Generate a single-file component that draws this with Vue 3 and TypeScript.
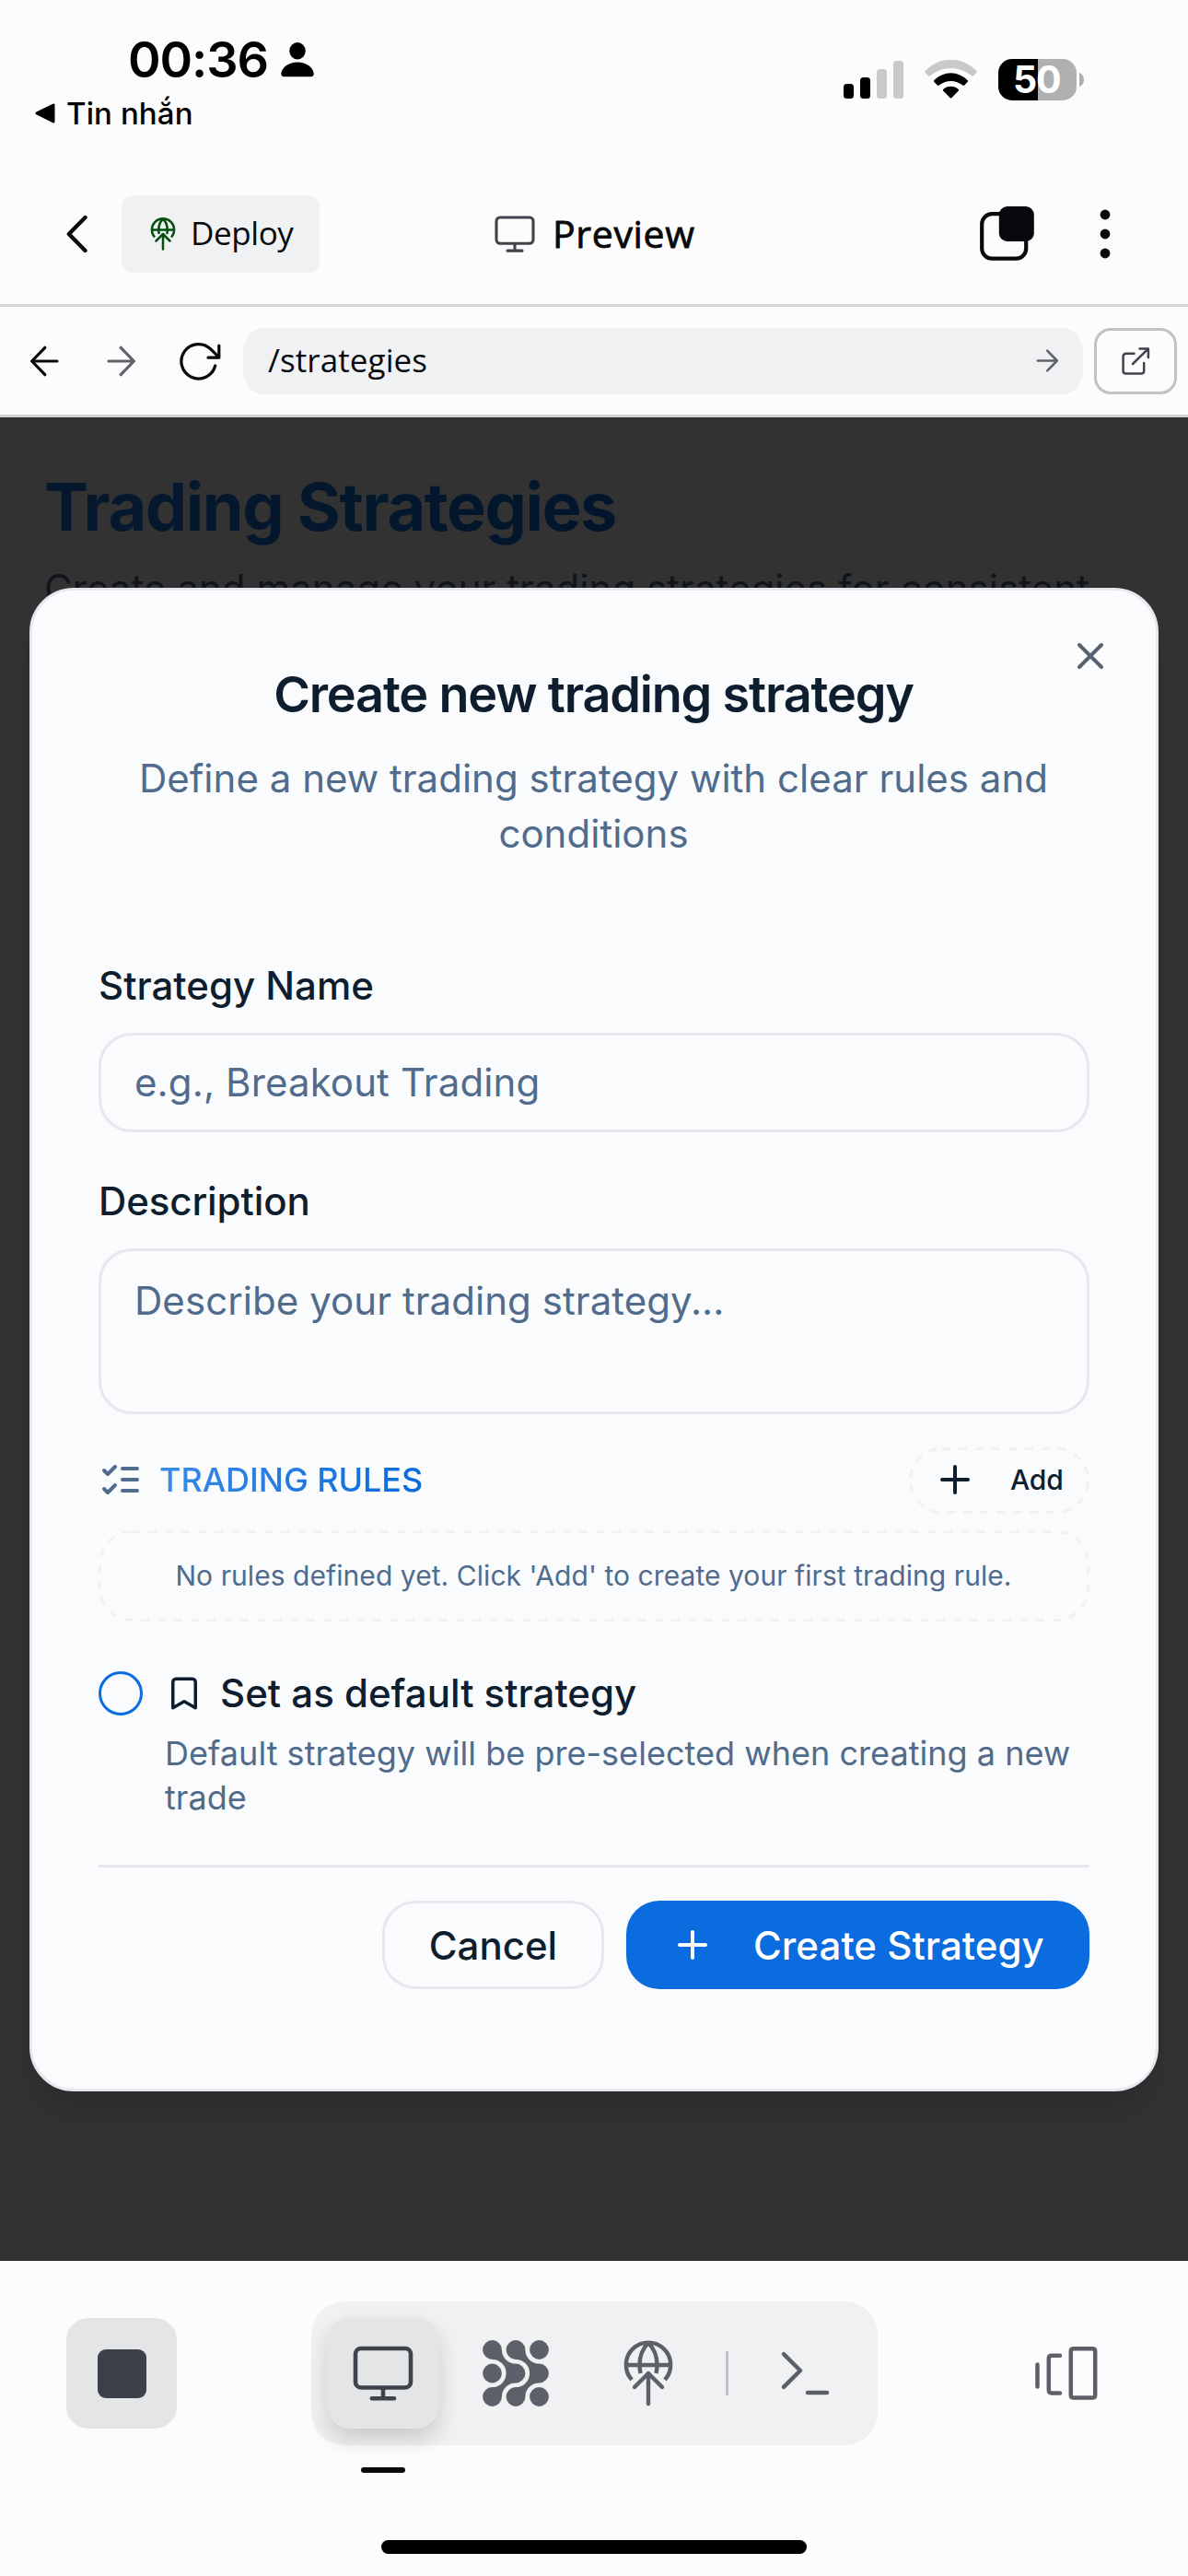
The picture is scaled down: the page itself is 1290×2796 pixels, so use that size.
<script setup lang="ts">
import { ref } from 'vue'

const path = ref('/strategies')
const strategyName = ref('')
const description = ref('')

interface SignalBar {
  x: number
  h: number
  on: boolean
}

const signal: SignalBar[] = [
  { x: 0, h: 16, on: true },
  { x: 18, h: 23, on: true },
  { x: 36, h: 32, on: false },
  { x: 54, h: 41, on: false },
]
</script>

<template>
  <div class="screen">
    <div class="status">
      <div class="status-left">
        <div class="time-row">
          <span class="time">00:36</span>
          <svg class="person" width="36" height="40" viewBox="0 0 36 40">
            <ellipse cx="18" cy="10.3" rx="8.7" ry="9.2" />
            <path d="M3.6 38.2Q.3 38.2 .3 35C.8 28 8.5 22.4 18 22.4S35.2 28 35.7 35Q35.7 38.2 32.4 38.2Z" />
          </svg>
        </div>
        <div class="back-app">
          <svg width="22" height="22" viewBox="0 0 22 22">
            <path d="M2 10.9 20 2V20Z" stroke="#000" stroke-width="3" stroke-linejoin="round" />
          </svg>
          <span>Tin nhắn</span>
        </div>
      </div>
      <div class="status-right">
        <svg width="65" height="42" viewBox="0 0 65 42">
          <rect
            v-for="b in signal"
            :key="b.x"
            :x="b.x"
            :y="42 - b.h"
            width="11"
            :height="b.h"
            rx="3.5"
            :fill="b.on ? '#000' : '#c9c9c9'"
          />
        </svg>
        <svg class="wifi" width="57" height="42" viewBox="0 0 57 42">
          <path
            fill="#c9c9c9"
            d="M.6 12A37.7 37.7 0 0 1 56.4 12Q57.2 13 56.4 13.8L52.8 17.6Q52 18.3 51.2 17.6A34 34 0 0 0 5.8 17.6Q5 18.3 4.2 17.6L.6 13.8Q-.2 13 .6 12Z"
          />
          <path
            d="M10.2 22.2A25.3 25.3 0 0 1 46.8 22.2Q47.5 23 46.8 23.8L43.2 27.6Q42.3 28.4 41.4 27.6A20 20 0 0 0 15.6 27.6Q14.7 28.4 13.8 27.6L10.2 23.8Q9.5 23 10.2 22.2Z"
          />
          <path d="M20.2 32A12.5 12.5 0 0 1 36.8 32Q37.5 32.8 36.8 33.6L29.3 41.2Q28.5 42 27.7 41.2L20.2 33.6Q19.5 32.8 20.2 32Z" />
        </svg>
        <div class="battery">50</div>
        <svg class="nub" width="5" height="15" viewBox="0 0 5 15">
          <path fill="#b0b0b0" d="M0 0C3 1 5 4 5 7.5S3 14 0 15Z" />
        </svg>
      </div>
    </div>

    <header class="topbar">
      <div class="top-left">
        <svg width="24" height="44" viewBox="0 0 24 44">
          <path class="ln" stroke="#07090c" stroke-width="4.4" d="M20.5 4 2.8 22 20.5 40" />
        </svg>
        <div class="deploy">
          <svg width="36" height="36" viewBox="0 0 72 72">
            <g fill="none" stroke="#05500f" stroke-width="5" stroke-linecap="round" stroke-linejoin="round">
              <path stroke-linecap="butt" d="M18 43A24.2 24.2 0 1 1 54 43M11.8 27H60.2M36 3C29 10 26.5 19 26.5 27Q26.5 32 27.6 36M36 3C43 10 45.5 19 45.5 27Q45.5 32 44.4 36" />
              <path d="M36 69V36M21 51 36 36 51 51" />
            </g>
          </svg>
          <span>Deploy</span>
        </div>
      </div>
      <div class="top-title">
        <svg width="48" height="48" viewBox="0 0 72 72">
          <g class="ln" stroke="#3f434b" stroke-width="4.6">
            <rect x="6" y="9" width="60" height="42.5" rx="6" />
            <path d="M36 52V63M24 63.2H48" />
          </g>
        </svg>
        <span>Preview</span>
      </div>
      <div class="top-right">
        <svg width="60" height="60" viewBox="0 0 60 60">
          <rect x="2.2" y="8.2" width="48" height="48.5" rx="11" fill="none" stroke="#07090c" stroke-width="4.2" />
          <rect x="20.8" y="0" width="38" height="38" rx="9" fill="#07090c" />
        </svg>
        <svg width="12" height="54" viewBox="0 0 12 54">
          <g fill="#07090c">
            <circle cx="6" cy="6" r="5.4" />
            <circle cx="6" cy="27" r="5.4" />
            <circle cx="6" cy="48" r="5.4" />
          </g>
        </svg>
      </div>
    </header>

    <nav class="urlbar">
      <svg width="36" height="36" viewBox="0 0 36 36">
        <path class="ln" stroke="#07090c" stroke-width="3.2" d="M18.8 3.3 4.6 18 18.8 32.7M4.6 18H32" />
      </svg>
      <svg width="36" height="36" viewBox="0 0 36 36">
        <path class="ln" stroke="#5f626a" stroke-width="3.2" d="M17.2 3.3 31.4 18 17.2 32.7M31.4 18H4" />
      </svg>
      <svg width="48" height="48" viewBox="0 0 48 48">
        <path
          class="ln"
          stroke="#07090c"
          stroke-width="3.2"
          d="M41.7 29A18.7 18.7 0 1 1 37 11.2Q41 15 45.8 20M45.8 7V20.2H34"
        />
      </svg>
      <div class="address">
        <span>{{ path }}</span>
        <svg width="27" height="27" viewBox="0 0 27 27">
          <path class="ln" stroke="#5f626a" stroke-width="2.5" d="M12.2 2.7 22.8 13.5 12.2 24.3M22.8 13.5H1.8" />
        </svg>
      </div>
      <div class="open-ext">
        <svg width="36" height="36" viewBox="0 0 36 36">
          <path
            class="ln"
            stroke="#3f434b"
            stroke-width="2.5"
            d="M16.5 9.7H8Q4.6 9.7 4.6 13V28.5Q4.6 31.6 8 31.6H24Q27.2 31.6 27.2 28.5V20M15 21 31.7 4.6M22.5 4.6H31.9V14"
          />
        </svg>
      </div>
    </nav>

    <main class="page">
      <h1>Trading Strategies</h1>
      <p class="lead">Create and manage your trading strategies for consistent</p>

      <div class="overlay">
        <section class="modal">
          <svg class="close" width="48" height="48" viewBox="0 0 24 24">
            <path class="ln" stroke="#566270" stroke-width="2" d="M18 6 6 18M6 6l12 12" />
          </svg>
          <h2>Create new trading strategy</h2>
          <p class="intro">Define a new trading strategy with clear rules and conditions</p>

          <label class="field-label">Strategy Name</label>
          <input v-model="strategyName" class="field" placeholder="e.g., Breakout Trading" />

          <label class="field-label second">Description</label>
          <textarea v-model="description" class="field area" placeholder="Describe your trading strategy..."></textarea>

          <div class="rules-head">
            <div class="rules-title">
              <svg width="48" height="48" viewBox="0 0 24 24">
                <path class="ln" stroke="#506b8b" stroke-width="2" d="m3 17 2 2 4-4M3 7l2 2 4-4M13 6h8M13 12h8M13 18h8" />
              </svg>
              <span>TRADING RULES</span>
            </div>
            <button class="add">
              <svg class="dashes" width="196" height="72">
                <rect x="1.5" y="1.5" width="193" height="69" rx="34.5" />
              </svg>
              <svg width="48" height="48" viewBox="0 0 24 24">
                <path class="ln" stroke="#0f1e2e" stroke-width="2" d="M5 12h14M12 5v14" />
              </svg>
              <span>Add</span>
            </button>
          </div>
          <div class="empty">
            <svg class="dashes" width="1076" height="99">
              <rect x="1.5" y="1.5" width="1073" height="96" rx="34.5" />
            </svg>
            No rules defined yet. Click 'Add' to create your first trading rule.
          </div>

          <div class="default-row">
            <span class="check"></span>
            <svg width="42" height="42" viewBox="0 0 24 24">
              <path class="ln" stroke="#0f1e2e" stroke-width="2" d="m19 21-7-4-7 4V5a2 2 0 0 1 2-2h10a2 2 0 0 1 2 2v16z" />
            </svg>
            <span class="default-label">Set as default strategy</span>
          </div>
          <p class="hint">Default strategy will be pre-selected when creating a new trade</p>

          <div class="actions">
            <button class="cancel">Cancel</button>
            <button class="create">
              <svg width="48" height="48" viewBox="0 0 24 24">
                <path class="ln" stroke="#fff" stroke-width="2" d="M5 12h14M12 5v14" />
              </svg>
              <span>Create Strategy</span>
            </button>
          </div>
        </section>
      </div>
    </main>

    <footer class="dock">
      <div class="dock-row">
        <div class="stop"><span></span></div>
        <div class="tabs">
          <div class="tab active">
            <svg width="72" height="72" viewBox="0 0 72 72">
              <g class="ln" stroke="#3f434b" stroke-width="4.6">
                <rect x="6" y="9" width="60" height="42.5" rx="6" />
                <path d="M36 52V63M23.8 63.2H48" />
              </g>
            </svg>
            <i></i>
          </div>
          <div class="tab">
            <svg width="72" height="72" viewBox="0 0 72 72" fill="#5d6068">
              <path
                d="M20.9 10.5A15.1 15.1 0 0 0 36 25.6A10.4 10.4 0 0 1 36 46.4A15.1 15.1 0 0 0 20.9 61.5A10.4 10.4 0 1 1 10.5 51.1A15.1 15.1 0 0 0 10.5 20.9A10.4 10.4 0 1 1 20.9 10.5Z"
              />
              <path
                d="M46.4 10.5A15.1 15.1 0 0 0 61.5 25.6A10.4 10.4 0 0 1 61.5 46.4A15.1 15.1 0 0 0 46.4 61.5A10.4 10.4 0 1 1 36 51.1A15.1 15.1 0 0 0 36 20.9A10.4 10.4 0 1 1 46.4 10.5Z"
              />
              <circle cx="61.5" cy="10.5" r="10.4" />
              <circle cx="10.5" cy="36" r="10.4" />
              <circle cx="61.5" cy="61.5" r="10.4" />
            </svg>
          </div>
          <div class="tab">
            <svg width="72" height="72" viewBox="0 0 72 72">
              <g fill="none" stroke="#5d6068" stroke-width="4.4" stroke-linecap="round" stroke-linejoin="round">
                <path stroke-linecap="butt" d="M18 43A24.2 24.2 0 1 1 54 43M11.8 27H60.2M36 3C29 10 26.5 19 26.5 27Q26.5 32 27.6 36M36 3C43 10 45.5 19 45.5 27Q45.5 32 44.4 36" />
                <path d="M36 69V36M21 51 36 36 51 51" />
              </g>
            </svg>
          </div>
          <span class="sep"></span>
          <div class="tab">
            <svg width="72" height="72" viewBox="0 0 72 72">
              <path class="ln" stroke="#5d6068" stroke-width="4.5" d="M12 15.2 30 33 12 50.8M38 57H59" />
            </svg>
          </div>
        </div>
        <div class="fold">
          <svg width="72" height="72" viewBox="0 0 72 72">
            <path
              class="ln"
              stroke="#5d6068"
              stroke-width="4.5"
              d="M4.5 26.5V50.5M29 16.8H20Q16.8 16.8 16.8 20V54.2Q16.8 57.4 20 57.4H29M44 9.2H64Q67.2 9.2 67.2 12V59.8Q67.2 62.6 64 62.6H44Q40.8 62.6 40.8 59.8V12Q40.8 9.2 44 9.2Z"
            />
          </svg>
        </div>
      </div>
      <div class="home"></div>
    </footer>
  </div>
</template>

<style>
html,
body {
  margin: 0;
  background: #fcfcfc;
}
</style>

<style scoped>
.screen {
  box-sizing: border-box;
  width: 1290px;
  height: 2796px;
  display: flex;
  flex-direction: column;
  overflow: hidden;
  background: #fcfcfc;
  font-family: Inter, sans-serif;
  color: #0f1e2e;
}
.screen * {
  box-sizing: border-box;
}
svg {
  display: block;
  flex: none;
}
.ln {
  fill: none;
  stroke-linecap: round;
  stroke-linejoin: round;
}
h1,
h2,
p {
  margin: 0;
}
button {
  font: inherit;
  color: inherit;
  padding: 0;
  margin: 0;
}

/* status bar */
.status {
  height: 178px;
  display: flex;
  justify-content: space-between;
  color: #000;
}
.status-left {
  padding-top: 35px;
}
.time-row {
  display: flex;
  padding-left: 139px;
}
.time {
  font-size: 54px;
  font-weight: 600;
  line-height: 60px;
  letter-spacing: -1.1px;
}
.person {
  margin: 10px 0 0 14px;
}
.back-app {
  display: flex;
  align-items: center;
  gap: 12px;
  margin-top: 8px;
  padding-left: 38px;
  font-size: 33px;
  font-weight: 500;
  line-height: 40px;
  letter-spacing: 0.1px;
}
.status-right {
  display: flex;
  align-items: flex-start;
  padding: 64px 113px 0 0;
}
.status-right > svg:first-child {
  margin-top: 1px;
}
.wifi {
  margin: 1px 23px 0 23px;
}
.battery {
  width: 85px;
  height: 45px;
  border-radius: 15px;
  background: linear-gradient(90deg, #000 0 43px, #b0b0b0 43px);
  color: #fff;
  font-size: 41px;
  font-weight: 700;
  line-height: 45px;
  letter-spacing: -1.2px;
  padding-left: 16px;
}
.nub {
  margin: 15px 0 0 3px;
}

/* app header */
.topbar {
  height: 155px;
  border-bottom: 3px solid #d4d4d4;
  padding: 0 72px;
  display: grid;
  grid-template-columns: 1fr auto 1fr;
  align-items: center;
  color: #07090c;
  font-family: 'Open Sans', sans-serif;
}
.top-left,
.top-title,
.top-right {
  display: flex;
  align-items: center;
}
.top-left {
  gap: 36px;
}
.deploy {
  width: 215px;
  height: 84px;
  border-radius: 12px;
  background: #eff1f3;
  display: flex;
  align-items: center;
  gap: 12px;
  padding-left: 27px;
  font-size: 35px;
}
.deploy span {
  padding-bottom: 4px;
  letter-spacing: -0.4px;
}
.top-title {
  gap: 15px;
  font-size: 41px;
  font-weight: 500;
}
.top-title span {
  width: 157px;
  padding: 0 0 2px 2px;
  letter-spacing: 0.65px;
  -webkit-text-stroke: 0.8px currentColor;
}
.top-right {
  justify-content: flex-end;
  gap: 70px;
  padding-right: 12px;
}

/* address bar */
.urlbar {
  height: 120px;
  border-bottom: 3px solid #d0d1d2;
  padding: 0 12px 0 30px;
  display: flex;
  align-items: center;
}
.urlbar > svg:nth-child(2) {
  margin: 0 42px 0 48px;
}
.address {
  flex: 1;
  height: 72px;
  margin: 0 12px 0 24px;
  padding: 0 24px 0 27px;
  border-radius: 24px;
  background: #eff1f3;
  display: flex;
  align-items: center;
  justify-content: space-between;
  font-family: 'Open Sans', sans-serif;
  font-size: 35px;
  color: #07090c;
}
.address span {
  padding-bottom: 3px;
  letter-spacing: 0.1px;
}
.open-ext {
  width: 90px;
  height: 72px;
  border: 3px solid #bfc4c3;
  border-radius: 18px;
  display: flex;
  align-items: center;
  justify-content: center;
}

/* page behind the dialog */
.page {
  position: relative;
  height: 2001px;
  padding: 52px 48px 0;
  background: #fbfbfb;
}
h1 {
  width: max-content;
  font-size: 72px;
  font-weight: 700;
  line-height: 90px;
  letter-spacing: -1.44px;
  color: transparent;
  background: linear-gradient(90deg, #1d7ce2, #0a6bdc);
  background-clip: text;
}
.lead {
  margin-top: 14px;
  font-size: 42px;
  line-height: 60px;
  letter-spacing: 0.05px;
  white-space: nowrap;
  color: #506b8b;
}
.overlay {
  position: absolute;
  inset: 0;
  background: rgba(0, 0, 0, 0.8);
  display: flex;
  align-items: center;
  justify-content: center;
}
.modal {
  position: relative;
  width: 1226px;
  height: 1632px;
  margin-top: 1px;
  border: 3px solid #e6e7ef;
  border-radius: 48px;
  background: #f9fbfd;
  padding: 72px;
  box-shadow:
    0 30px 45px -9px rgba(0, 0, 0, 0.1),
    0 12px 18px -12px rgba(0, 0, 0, 0.1);
}
.close {
  position: absolute;
  top: 47px;
  right: 47px;
}
h2 {
  font-size: 54px;
  font-weight: 600;
  line-height: 81px;
  letter-spacing: -1.18px;
  text-align: center;
  padding-right: 1px;
}
.intro {
  margin: 21px 0 114px;
  font-size: 42px;
  line-height: 60px;
  letter-spacing: 0.02px;
  text-align: center;
  padding-right: 1px;
  color: #506b8b;
}
.field-label {
  display: block;
  font-size: 42px;
  font-weight: 500;
  line-height: 42px;
  margin-bottom: 30px;
}
.field-label.second {
  margin-top: 54px;
  letter-spacing: -0.1px;
}
.field {
  display: block;
  width: 100%;
  height: 108px;
  border: 3px solid #e6e7ef;
  border-radius: 36px;
  background: transparent;
  padding: 0 36px 2px;
  font: 400 42px/60px Inter, sans-serif;
  letter-spacing: 0.12px;
  outline: none;
}
.field::placeholder {
  color: #506b8b;
  opacity: 1;
}
.area {
  height: 180px;
  padding: 24px 36px;
  letter-spacing: 0.06px;
  resize: none;
}
.rules-head {
  margin-top: 36px;
  height: 72px;
  display: flex;
  align-items: center;
  justify-content: space-between;
}
.rules-title {
  display: flex;
  align-items: center;
  gap: 18px;
  padding-bottom: 2px;
  font-size: 36px;
  font-weight: 500;
  letter-spacing: -0.08px;
}
.rules-title span {
  color: transparent;
  background: linear-gradient(90deg, #3b8ae6, #0a6bdc);
  background-clip: text;
}
.add {
  position: relative;
  width: 196px;
  height: 72px;
  border: 0;
  background: transparent;
  display: flex;
  align-items: center;
  padding: 0 0 2px 26px;
  gap: 36px;
  font-size: 30px;
  font-weight: 500;
  letter-spacing: -0.2px;
}
.dashes {
  position: absolute;
  top: 0;
  left: 0;
  fill: none;
  stroke: #f0f1f3;
  stroke-width: 3px;
  stroke-dasharray: 9 9;
}
.empty {
  position: relative;
  margin-top: 18px;
  height: 99px;
  font-size: 30px;
  line-height: 99px;
  letter-spacing: 0.06px;
  text-align: center;
  padding-right: 1px;
  color: #506b8b;
}
.default-row {
  margin-top: 54px;
  height: 48px;
  display: flex;
  align-items: center;
}
.check {
  width: 48px;
  height: 48px;
  border: 3px solid #0a6de0;
  border-radius: 50%;
  margin-right: 24px;
}
.default-label {
  margin-left: 18px;
  font-size: 42px;
  font-weight: 500;
  line-height: 48px;
}
.hint {
  margin-top: 17px;
  padding-left: 72px;
  font-size: 36px;
  line-height: 48px;
  letter-spacing: 0.03px;
  color: #506b8b;
}
.actions {
  margin-top: 49px;
  border-top: 3px solid #e6e7ef;
  padding-top: 36px;
  display: flex;
  justify-content: flex-end;
  gap: 24px;
  font-size: 42px;
  font-weight: 500;
}
.cancel {
  width: 241px;
  height: 96px;
  border: 3px solid #e6e7ef;
  border-radius: 36px;
  background: transparent;
}
.create {
  width: 503px;
  height: 96px;
  border: 0;
  border-radius: 36px;
  background: #0a6cde;
  color: #fff;
  display: flex;
  align-items: center;
  padding-left: 48px;
  gap: 42px;
  letter-spacing: 0.05px;
}

/* bottom dock */
.dock {
  flex: 1;
  padding: 44px 72px 0;
  display: flex;
  flex-direction: column;
  align-items: center;
}
.dock-row {
  width: 100%;
  display: grid;
  grid-template-columns: 1fr auto 1fr;
  align-items: center;
}
.stop {
  width: 120px;
  height: 120px;
  border-radius: 24px;
  background: #e4e5e7;
  display: flex;
  align-items: center;
  justify-content: center;
}
.stop span {
  width: 53px;
  height: 53px;
  border-radius: 9px;
  background: #3d4049;
}
.tabs {
  height: 156px;
  padding: 18px;
  border-radius: 36px;
  background: #eff1f3;
  display: flex;
  align-items: center;
  gap: 24px;
}
.tab {
  position: relative;
  width: 120px;
  height: 120px;
  border-radius: 24px;
  display: flex;
  align-items: center;
  justify-content: center;
}
.tab.active {
  background: #e4e5e7;
  box-shadow: 0 12px 24px rgba(0, 0, 0, 0.16);
}
.tab i {
  position: absolute;
  top: 162px;
  left: 36px;
  width: 48px;
  height: 6px;
  border-radius: 3px;
  background: #07090c;
}
.sep {
  width: 3px;
  height: 48px;
  background: #c1c3c6;
}
.fold {
  justify-self: end;
  width: 120px;
  display: flex;
  justify-content: center;
}
.home {
  margin-top: 103px;
  width: 462px;
  height: 15px;
  border-radius: 8px;
  background: #000;
}
</style>
